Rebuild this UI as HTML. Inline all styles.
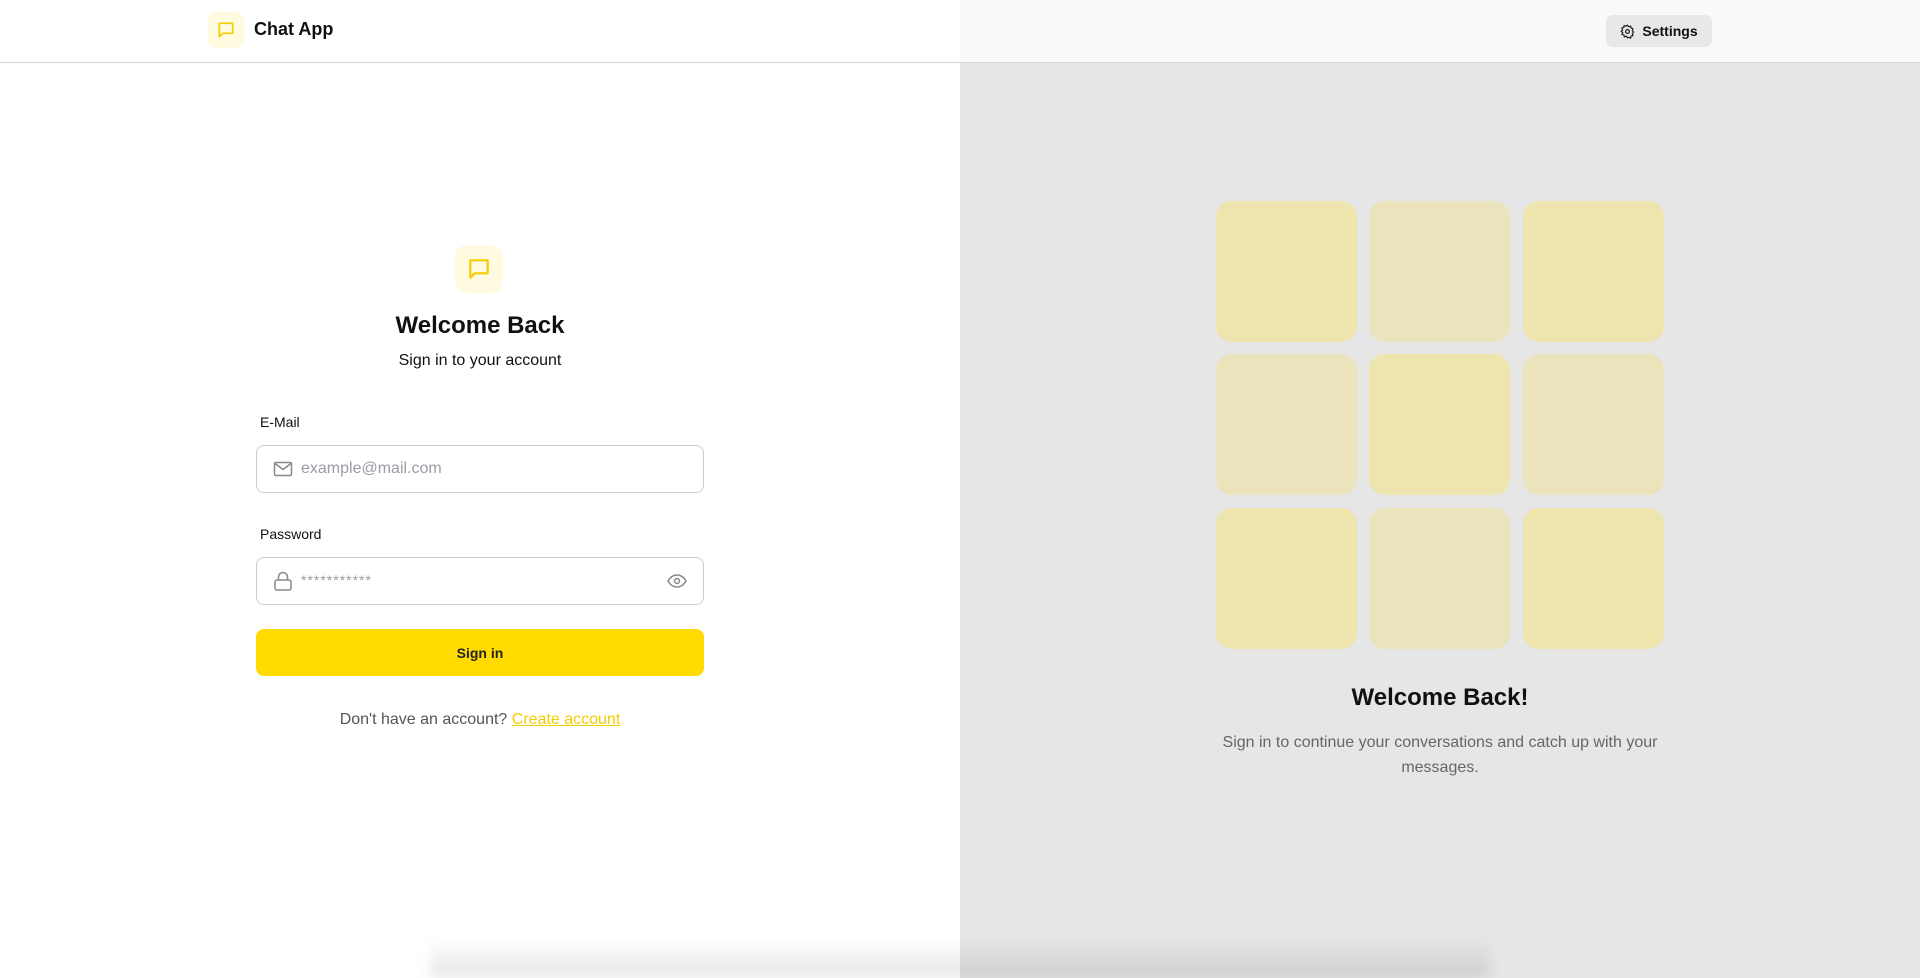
<!DOCTYPE html>
<html><head><meta charset="utf-8"><style>
*{box-sizing:border-box;margin:0;padding:0}
html,body{width:1920px;height:978px;overflow:hidden}
body{font-family:"Liberation Sans",sans-serif;background:#fff;color:#111}
.wrap{position:relative;width:1920px;height:978px;overflow:hidden}
.hdr{position:absolute;left:0;top:0;width:1920px;height:63px;background:linear-gradient(90deg,#fff 0,#fff 960px,#f9f9f9 960px);border-bottom:1px solid #d4d4d4;z-index:2}
.logo{position:absolute;left:208px;top:12px;width:36px;height:36px;border-radius:8px;background:#fffbe0;display:flex;align-items:center;justify-content:center}
.brand{position:absolute;left:254px;top:19px;font-size:18px;font-weight:bold;color:#111}
.set{position:absolute;left:1606px;top:15px;width:106px;height:32px;border-radius:7px;background:#e8e8e8;display:flex;align-items:center;justify-content:center;gap:7px;font-size:14px;font-weight:bold}
.right{position:absolute;left:960px;top:63px;width:960px;height:915px;background:#e6e6e6}
.tile{position:absolute;width:141px;height:141px;border-radius:16px}
.a{background:#eee4ad}.b{background:#eae3bb}
.bigicon{position:absolute;left:455px;top:245px;width:48px;height:48px;border-radius:12px;background:#fffbe0;display:flex;align-items:center;justify-content:center}
.c{position:absolute;text-align:center}
.lbl{position:absolute;left:260px;font-size:14px;color:#111}
.inp{position:absolute;left:256px;width:448px;height:48px;border:1px solid #ccc;border-radius:8px;background:#fff}
.btn{position:absolute;left:256px;top:629px;width:448px;height:47px;border-radius:8px;background:#ffdb00;font-size:14px;font-weight:bold;color:#222;display:flex;align-items:center;justify-content:center}
.shadow{position:absolute;left:430px;top:938px;width:1060px;height:40px;background:linear-gradient(rgba(0,0,0,0),rgba(0,0,0,.1));filter:blur(6px)}
</style></head><body><div class="wrap">
<div class="hdr">
 <div class="logo"><svg width="20" height="20" viewBox="0 0 24 24" fill="none" stroke="#f5cc00" stroke-width="2" stroke-linejoin="round"><path d="M4 4h16v12H8l-4 4z"/></svg></div>
 <div class="brand">Chat App</div>
 <div class="set"><svg width="15" height="15" viewBox="0 0 24 24" fill="none" stroke="#222" stroke-width="2"><circle cx="12" cy="12" r="3"/><path d="M12 2l2 2.5 3-1 .7 3 3 1-1 3 2 2.5-2 2.5 1 3-3 1-.7 3-3-1L12 22l-2-2.5-3 1-.7-3-3-1 1-3L2 12l2-2.5-1-3 3-1 .7-3 3 1z"/></svg>Settings</div>
</div>
<div class="right">
 <div class="tile a" style="left:256px;top:138px"></div>
 <div class="tile b" style="left:409px;top:138px"></div>
 <div class="tile a" style="left:563px;top:138px"></div>
 <div class="tile b" style="left:256px;top:291px"></div>
 <div class="tile a" style="left:409px;top:291px"></div>
 <div class="tile b" style="left:563px;top:291px"></div>
 <div class="tile a" style="left:256px;top:445px"></div>
 <div class="tile b" style="left:409px;top:445px"></div>
 <div class="tile a" style="left:563px;top:445px"></div>
 <div class="c" style="left:0;width:960px;top:621px;font-size:24px;font-weight:bold">Welcome Back!</div>
 <div class="c" style="left:250px;width:460px;top:667px;font-size:16px;line-height:25px;color:#666">Sign in to continue your conversations and catch up with your messages.</div>
</div>
<div class="bigicon"><svg width="26" height="26" viewBox="0 0 24 24" fill="none" stroke="#f5cc00" stroke-width="2" stroke-linejoin="round"><path d="M4 4h16v12H8l-4 4z"/></svg></div>
<div class="c" style="left:0;width:960px;top:312px;font-size:24px;font-weight:bold">Welcome Back</div>
<div class="c" style="left:0;width:960px;top:352px;font-size:16px">Sign in to your account</div>
<div class="lbl" style="top:414px">E-Mail</div>
<div class="inp" style="top:445px">
 <svg style="position:absolute;left:16px;top:14px" width="20" height="18" viewBox="0 0 20 18" fill="none" stroke="#888" stroke-width="1.5"><rect x="1.5" y="2.5" width="17" height="13" rx="1.5"/><path d="M2 3.5l8 6 8-6"/></svg>
 <span style="position:absolute;left:44px;top:14px;font-size:16px;color:#9a9ca3">example@mail.com</span>
</div>
<div class="lbl" style="top:526px">Password</div>
<div class="inp" style="top:557px">
 <svg style="position:absolute;left:16px;top:12px" width="20" height="22" viewBox="0 0 20 22" fill="none" stroke="#888" stroke-width="1.5"><rect x="2" y="10" width="16" height="10" rx="2"/><path d="M5.5 10V7a4.5 4.5 0 0 1 9 0v3"/></svg>
 <span style="position:absolute;left:44px;top:14px;font-size:14px;color:#9a9ca3;letter-spacing:1px">***********</span>
 <svg style="position:absolute;right:16px;top:15px" width="20" height="16" viewBox="0 0 20 16" fill="none" stroke="#888" stroke-width="1.5"><path d="M1 8c2.5-4.5 5.5-6 9-6s6.5 1.5 9 6c-2.5 4.5-5.5 6-9 6s-6.5-1.5-9-6z"/><circle cx="10" cy="8" r="2.5"/></svg>
</div>
<div class="btn">Sign in</div>
<div class="c" style="left:0;width:960px;top:711px;font-size:16px;color:#555">Don't have an account? <span style="color:#f5cc00;text-decoration:underline">Create account</span></div>
<div class="shadow"></div>
</div></body></html>
